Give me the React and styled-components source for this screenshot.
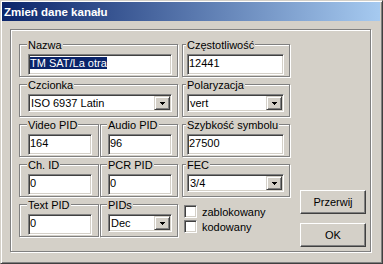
import React from 'react';
import styled, { createGlobalStyle } from 'styled-components';

const GlobalStyle = createGlobalStyle`
  html, body {
    margin: 0;
    padding: 0;
    background: #d4d0c8;
  }
  body {
    font-family: "Liberation Sans", Arial, sans-serif;
    font-size: 11px;
    color: #000;
  }
  * {
    box-sizing: border-box;
  }
`;

const Window = styled.div`
  width: 383px;
  height: 264px;
  display: flex;
  flex-direction: column;
  padding: 1px 2px 2px 1px;
  background: #d4d0c8;
  border: 1px solid;
  border-color: #d4d0c8 #404040 #404040 #d4d0c8;
  box-shadow: inset 1px 1px 0 #fff, inset -1px -1px 0 #808080;
`;

const TitleBar = styled.div`
  height: 19px;
  padding: 1px 0 0 2px;
  line-height: 18px;
  background: linear-gradient(to right, #0a246a, #a6caf0);
  color: #fff;
  font-weight: bold;
  font-size: 11.5px;
  white-space: nowrap;
`;

const Frame = styled.div`
  margin: 8px 9px 0 8px;
  display: flex;
  padding: 14px 4px 4px 8px;
  border: 1px solid #808080;
  box-shadow: inset 1px 1px 0 #fff, 1px 1px 0 #fff;
`;

const Fields = styled.div`
  display: grid;
  grid-template-columns: 80px 78px 111px;
  grid-template-rows: repeat(5, 33px);
  row-gap: 7px;
  column-gap: 1px;
  margin-bottom: 10px;
`;

const Group = styled.div`
  grid-column: ${p => (p.$span ? 'span 2' : 'auto')};
  margin-left: ${p => (p.$shift ? 3 : 0)}px;
  display: flex;
  flex-direction: column;
  align-items: flex-start;
  padding-left: ${p => p.$pad}px;
  border: 1px solid #808080;
  box-shadow: inset 1px 1px 0 #fff, 1px 1px 0 #fff;
`;

const Legend = styled.span`
  margin: -6px 0 0 -1px;
  padding: 0 1px;
  background: #d4d0c8;
  line-height: 13px;
  white-space: nowrap;
`;

const sunken = `
  background: #fff;
  border: 1px solid;
  border-color: #808080 #fff #fff #808080;
  box-shadow: inset 1px 1px 0 #404040, inset -1px -1px 0 #d4d0c8;
`;

const TextBox = styled.div`
  ${sunken}
  width: ${p => p.$w}px;
  height: 21px;
  margin-top: 2px;
  padding: 1px 1px;
  line-height: 14px;
  white-space: nowrap;
  overflow: hidden;
`;

const Selected = styled.span`
  background: #0a246a;
  color: #fff;
`;

const Combo = styled.div`
  ${sunken}
  width: ${p => p.$w}px;
  height: 18px;
  margin-top: 2px;
  display: flex;
  padding: 1px;
  line-height: 14px;
`;

const ComboText = styled.span`
  flex: 1;
  padding-left: 1px;
  white-space: nowrap;
`;

const DropButton = styled.div`
  width: 16px;
  height: 14px;
  display: flex;
  align-items: center;
  justify-content: center;
  background: #d4d0c8;
  border: 1px solid;
  border-color: #d4d0c8 #404040 #404040 #d4d0c8;
  box-shadow: inset 1px 1px 0 #fff, inset -1px -1px 0 #808080;
`;

const Checks = styled.div`
  margin-left: 3px;
  padding: 1px 0 0 2px;
  display: flex;
  flex-direction: column;
  gap: 2px;
`;

const CheckRow = styled.label`
  display: flex;
  align-items: center;
  gap: 5px;
  height: 13px;
  line-height: 12px;
`;

const CheckBox = styled.span`
  ${sunken}
  width: 13px;
  height: 13px;
`;

const ButtonColumn = styled.div`
  align-self: flex-end;
  margin-left: 10px;
  display: flex;
  flex-direction: column;
  gap: 9px;
`;

const Button = styled.button`
  width: 66px;
  height: 24px;
  padding: 0;
  font: inherit;
  color: #000;
  background: #d4d0c8;
  border: 1px solid;
  border-color: #fff #404040 #404040 #fff;
  box-shadow: inset -1px -1px 0 #808080;
`;

const Arrow = () => (
  <svg width="5" height="3" viewBox="0 0 5 3" shapeRendering="crispEdges">
    <rect x="0" y="0" width="5" height="1" fill="#000" />
    <rect x="1" y="1" width="3" height="1" fill="#000" />
    <rect x="2" y="2" width="1" height="1" fill="#000" />
  </svg>
);

const Select = ({ w, children }) => (
  <Combo $w={w}>
    <ComboText>{children}</ComboText>
    <DropButton>
      <Arrow />
    </DropButton>
  </Combo>
);

const App = () => (
  <>
    <GlobalStyle />
    <Window>
      <TitleBar>Zmień dane kanału</TitleBar>
      <Frame>
        <Fields>
          <Group $span $pad={8}>
            <Legend>Nazwa</Legend>
            <TextBox $w={144}>
              <Selected>TM SAT/La otra</Selected>
            </TextBox>
          </Group>
          <Group $shift $pad={4}>
            <Legend>Częstotliwość</Legend>
            <TextBox $w={97}>12441</TextBox>
          </Group>

          <Group $span $pad={8}>
            <Legend>Czcionka</Legend>
            <Select w={144}>ISO 6937 Latin</Select>
          </Group>
          <Group $shift $pad={4}>
            <Legend>Polaryzacja</Legend>
            <Select w={97}>vert</Select>
          </Group>

          <Group $pad={8}>
            <Legend>Video PID</Legend>
            <TextBox $w={64}>164</TextBox>
          </Group>
          <Group $pad={7}>
            <Legend>Audio PID</Legend>
            <TextBox $w={64}>96</TextBox>
          </Group>
          <Group $shift $pad={4}>
            <Legend>Szybkość symbolu</Legend>
            <TextBox $w={97}>27500</TextBox>
          </Group>

          <Group $pad={8}>
            <Legend>Ch. ID</Legend>
            <TextBox $w={64}>0</TextBox>
          </Group>
          <Group $pad={7}>
            <Legend>PCR PID</Legend>
            <TextBox $w={64}>0</TextBox>
          </Group>
          <Group $shift $pad={4}>
            <Legend>FEC</Legend>
            <Select w={97}>3/4</Select>
          </Group>

          <Group $pad={8}>
            <Legend>Text PID</Legend>
            <TextBox $w={64}>0</TextBox>
          </Group>
          <Group $pad={7}>
            <Legend>PIDs</Legend>
            <Select w={64}>Dec</Select>
          </Group>
          <Checks>
            <CheckRow>
              <CheckBox />
              zablokowany
            </CheckRow>
            <CheckRow>
              <CheckBox />
              kodowany
            </CheckRow>
          </Checks>
        </Fields>
        <ButtonColumn>
          <Button>Przerwij</Button>
          <Button>OK</Button>
        </ButtonColumn>
      </Frame>
    </Window>
  </>
);

export default App;
